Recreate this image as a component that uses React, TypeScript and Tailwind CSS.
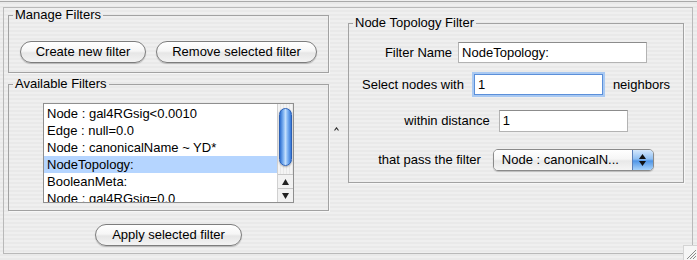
import React from 'react'

const font = { fontFamily: '"Liberation Sans", Arial, sans-serif' }

function AquaButton({ label, w }: { label: string; w: string }) {
  return (
    <button
      className={`${w} h-[22px] shrink-0 rounded-full border border-[#7d7d7d] bg-[linear-gradient(180deg,#ffffff_0%,#f6f6f6_45%,#e6e6e6_55%,#f3f3f3_100%)] shadow-[0_1px_1px_rgba(0,0,0,0.22)] text-[13px] leading-[20px] text-black text-center`}
    >
      {label}
    </button>
  )
}

function Box({ title, className, children }: { title: string; className?: string; children: React.ReactNode }) {
  return (
    <fieldset className={`border border-[#a2a2a2] shadow-[1px_1px_0_#f7f7f7] ${className ?? ''}`}>
      <legend className="ml-[4px] px-[2px] text-[13px] leading-[14px] text-black">{title}</legend>
      {children}
    </fieldset>
  )
}

const items = [
  'Node : gal4RGsig<0.0010',
  'Edge : null=0.0',
  'Node : canonicalName ~ YD*',
  'NodeTopology:',
  'BooleanMeta:',
  'Node : gal4RGsig=0.0',
]

function FilterList() {
  return (
    <div className="mx-auto w-[251px] h-[100px] flex border border-[#8f8f8f] bg-white overflow-hidden">
      <div className="flex-1 pt-[1px] overflow-hidden">
        {items.map((t, i) => (
          <div
            key={t}
            className={`h-[17px] pl-[3px] text-[13px] leading-[17px] whitespace-nowrap text-black ${i === 3 ? 'bg-[#b5d5ff]' : ''}`}
          >
            {t}
          </div>
        ))}
      </div>
      {/* scrollbar */}
      <div className="w-[16px] flex flex-col border-l border-[#d0d0d0] bg-[repeating-linear-gradient(90deg,#f4f4f4_0px,#f4f4f4_2px,#e8e8e8_2px,#e8e8e8_3px)]">
        <div className="flex-1 pt-[4px] px-[1px]">
          <div className="mx-auto w-[13px] h-[58px] rounded-full border border-[#2a5fb5] bg-[linear-gradient(90deg,#2e6fd0_0%,#7fb3f2_30%,#c2defc_50%,#7fb3f2_70%,#3577d8_100%)] shadow-[0_1px_2px_rgba(0,0,0,0.3)]" />
        </div>
        <div className="h-[14px] flex items-center justify-center border-t border-[#c8c8c8] bg-[#f2f2f2]">
          <svg width="7" height="6" viewBox="0 0 7 6">
            <path d="M3.5 0 L7 6 L0 6 Z" fill="#222" />
          </svg>
        </div>
        <div className="h-[14px] flex items-center justify-center border-t border-[#c8c8c8] bg-[#f2f2f2]">
          <svg width="7" height="6" viewBox="0 0 7 6">
            <path d="M0 0 L7 0 L3.5 6 Z" fill="#222" />
          </svg>
        </div>
      </div>
    </div>
  )
}

function TextField({ value, w, focused }: { value: string; w: string; focused?: boolean }) {
  return (
    <div
      className={`${w} h-full shrink-0 bg-white pl-[3px] text-[13px] leading-[19px] text-black border ${
        focused
          ? 'border-[#5b8fd9] shadow-[0_0_0_2px_#a9c9f2]'
          : 'border-[#b3b3b3] border-t-[#8c8c8c]'
      }`}
    >
      {value}
    </div>
  )
}

function PopupSelect() {
  return (
    <div className="w-[161px] h-full shrink-0 flex rounded-[5px] border border-[#8a8a8a] overflow-hidden shadow-[0_1px_1px_rgba(0,0,0,0.2)]">
      <div className="flex-1 pl-[8px] text-[13px] leading-[20px] text-black bg-[linear-gradient(180deg,#ffffff_0%,#f6f6f6_45%,#e8e8e8_55%,#f5f5f5_100%)] whitespace-nowrap">
        Node : canonicalN...
      </div>
      <div className="w-[21px] flex flex-col items-center justify-center gap-[2px] border-l border-[#5a7fb8] bg-[linear-gradient(180deg,#d5e8fc_0%,#8fbff3_45%,#4f95e6_55%,#a8d3fb_100%)]">
        <svg width="7" height="5" viewBox="0 0 7 5">
          <path d="M3.5 0 L7 5 L0 5 Z" fill="#111" />
        </svg>
        <svg width="7" height="5" viewBox="0 0 7 5">
          <path d="M0 0 L7 0 L3.5 5 Z" fill="#111" />
        </svg>
      </div>
    </div>
  )
}

export default function App() {
  return (
    <div
      className="relative w-[697px] h-[260px] overflow-hidden bg-[repeating-linear-gradient(180deg,#efefef_0px,#efefef_2px,#e9e9e9_2px,#e9e9e9_4px)] text-black"
      style={font}
    >
      <div className="h-[2px] border-b border-[#a9a9a9]" />
      <div className="ml-[3px] mt-[5px] w-[690px] h-[247px] border border-[#b9b9b9] flex">
        {/* left column */}
        <div className="ml-[4px] w-[321px] flex flex-col">
          <Box title="Manage Filters" className="h-[65px]">
            <div className="flex gap-[10px] pl-[11px] pt-[19px]">
              <AquaButton label="Create new filter" w="w-[126px]" />
              <AquaButton label="Remove selected filter" w="w-[161px]" />
            </div>
          </Box>
          <Box title="Available Filters" className="mt-[4px] h-[134px]">
            <div className="pt-[12px]">
              <FilterList />
            </div>
          </Box>
          <div className="mt-[13px] flex justify-center">
            <AquaButton label="Apply selected filter" w="w-[147px]" />
          </div>
        </div>

        {/* split divider */}
        <div className="w-[19px] pl-[5px] pt-[119px]">
          <svg width="5" height="4" viewBox="0 0 5 4">
            <path d="M0.5 3.5 L2.5 0.8 L4.5 3.5" stroke="#333" strokeWidth="1.1" fill="none" />
          </svg>
        </div>

        {/* right panel */}
        <Box title="Node Topology Filter" className="mt-[8px] w-[336px] h-[167px] self-start">
          <div className="flex flex-col text-[13px]">
            <div className="mt-[12px] h-[21px] flex items-center justify-center gap-[6px]">
              <span>Filter Name</span>
              <TextField value="NodeTopology:" w="w-[189px]" />
            </div>
            <div className="mt-[11px] h-[21px] flex items-center justify-center gap-[10px]">
              <span>Select nodes with</span>
              <TextField value="1" w="w-[129px]" focused />
              <span>neighbors</span>
            </div>
            <div className="mt-[15px] h-[22px] flex items-center justify-center gap-[9px]">
              <span>within distance</span>
              <TextField value="1" w="w-[129px]" />
            </div>
            <div className="mt-[17px] h-[22px] flex items-center justify-center gap-[12px]">
              <span>that pass the filter</span>
              <PopupSelect />
            </div>
          </div>
        </Box>
      </div>

      {/* resize grip */}
      <div className="absolute right-0 bottom-0 w-[14px] h-[15px] bg-[#f6f6f6] border-l border-t border-[#d4d4d4]">
        <svg width="13" height="14" viewBox="0 0 13 14">
          <path d="M12 4 L3 13 M12 7 L6 13 M12 10 L9 13" stroke="#8a8a8a" strokeWidth="1" />
        </svg>
      </div>
    </div>
  )
}
